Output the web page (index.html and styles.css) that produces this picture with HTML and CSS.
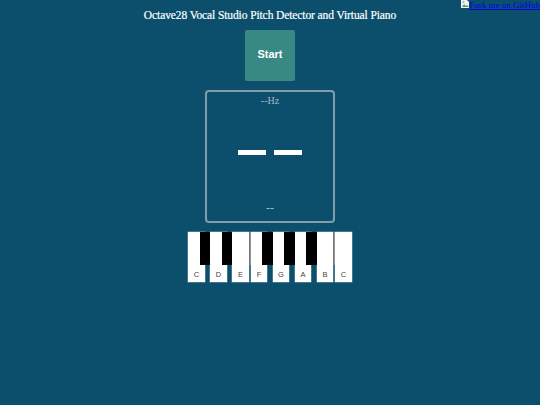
FILE: index.html
```html
<!DOCTYPE html>
<html lang="en">
<head>
<meta charset="utf-8">
<title>Octave28 Vocal Studio</title>
<link rel="stylesheet" href="styles.css">
</head>
<body>
<a class="fork" href="#"><svg class="broken" width="8" height="8" viewBox="0 0 8 8"><path d="M0 0h6l2 2v6H0z" fill="#eef2f4"/><path d="M1 7l2-3 2 2 1-1 2 2z" fill="#5c9c5c"/><circle cx="2.5" cy="2" r="1" fill="#8fb4e6"/></svg>Fork me on GitHub</a>
<h1 class="title">Octave28 Vocal Studio Pitch Detector and Virtual Piano</h1>
<button class="start">Start</button>
<section class="tuner">
  <div class="hz">--Hz</div>
  <div class="note"><span class="dash"></span><span class="dash"></span></div>
  <div class="cents">--</div>
</section>
<div class="piano">
  <div class="key">C</div><span class="black"></span>
  <div class="key">D</div><span class="black"></span>
  <div class="key">E</div><span class="seam"></span>
  <div class="key">F</div><span class="black"></span>
  <div class="key">G</div><span class="black"></span>
  <div class="key">A</div><span class="black"></span>
  <div class="key">B</div><span class="seam"></span>
  <div class="key">C</div>
</div>
</body>
</html>
```
FILE: styles.css
```css
html, body { margin: 0; height: 100%; }
body {
  background: #0b4f6c;
  display: flex;
  flex-direction: column;
  align-items: center;
  font-family: "Liberation Serif", serif;
  color: #fff;
  overflow: hidden;
}
.fork {
  position: absolute;
  top: 0;
  right: 0;
  white-space: nowrap;
  color: #0000ee;
  font-size: 9px;
  line-height: 11px;
}
.broken { vertical-align: top; }
.title {
  margin: 8px 0 0;
  font-size: 11.5px;
  line-height: 14px;
  letter-spacing: -0.1px;
  font-family: "Liberation Serif", serif;
  font-weight: 400;
  -webkit-text-stroke: 0.2px #fff;
}
.start {
  margin-top: 8px;
  width: 50px;
  height: 50.5px;
  border: 0;
  border-radius: 2px;
  background: #388883;
  color: #fff;
  font: 700 11px "Liberation Sans", sans-serif;
  padding: 0 0 2px;
}
.tuner {
  margin-top: 9px;
  width: 130px;
  height: 133px;
  box-sizing: border-box;
  border: 2px solid #7f9ea9;
  border-radius: 4px;
  display: flex;
  flex-direction: column;
  align-items: center;
  color: #a5bbc4;
  font-size: 10px;
}
.hz { margin-top: 3.5px; line-height: 12px; }
.note { display: flex; gap: 8px; margin-top: 43px; }
.dash { width: 28px; height: 4.5px; background: #fff; }
.cents { margin-top: 46.5px; line-height: 14px; font-size: 12px; }
.piano { margin-top: 9px; display: flex; align-items: flex-start; }
.key {
  width: 16.5px;
  height: 50.5px;
  background: #fff;
  box-shadow: 0 0 0 0.5px rgba(190, 215, 225, 0.6);
  color: #444;
  font: 7.5px/8px "Liberation Sans", sans-serif;
  display: flex;
  align-items: flex-end;
  justify-content: center;
  padding-bottom: 3.5px;
  box-sizing: border-box;
}
.seam { width: 2px; height: 33px; background: #777; }
.black {
  position: relative;
  z-index: 1;
  margin-left: -5px;
  width: 10.5px;
  height: 33px;
  background: #000;
}
```
